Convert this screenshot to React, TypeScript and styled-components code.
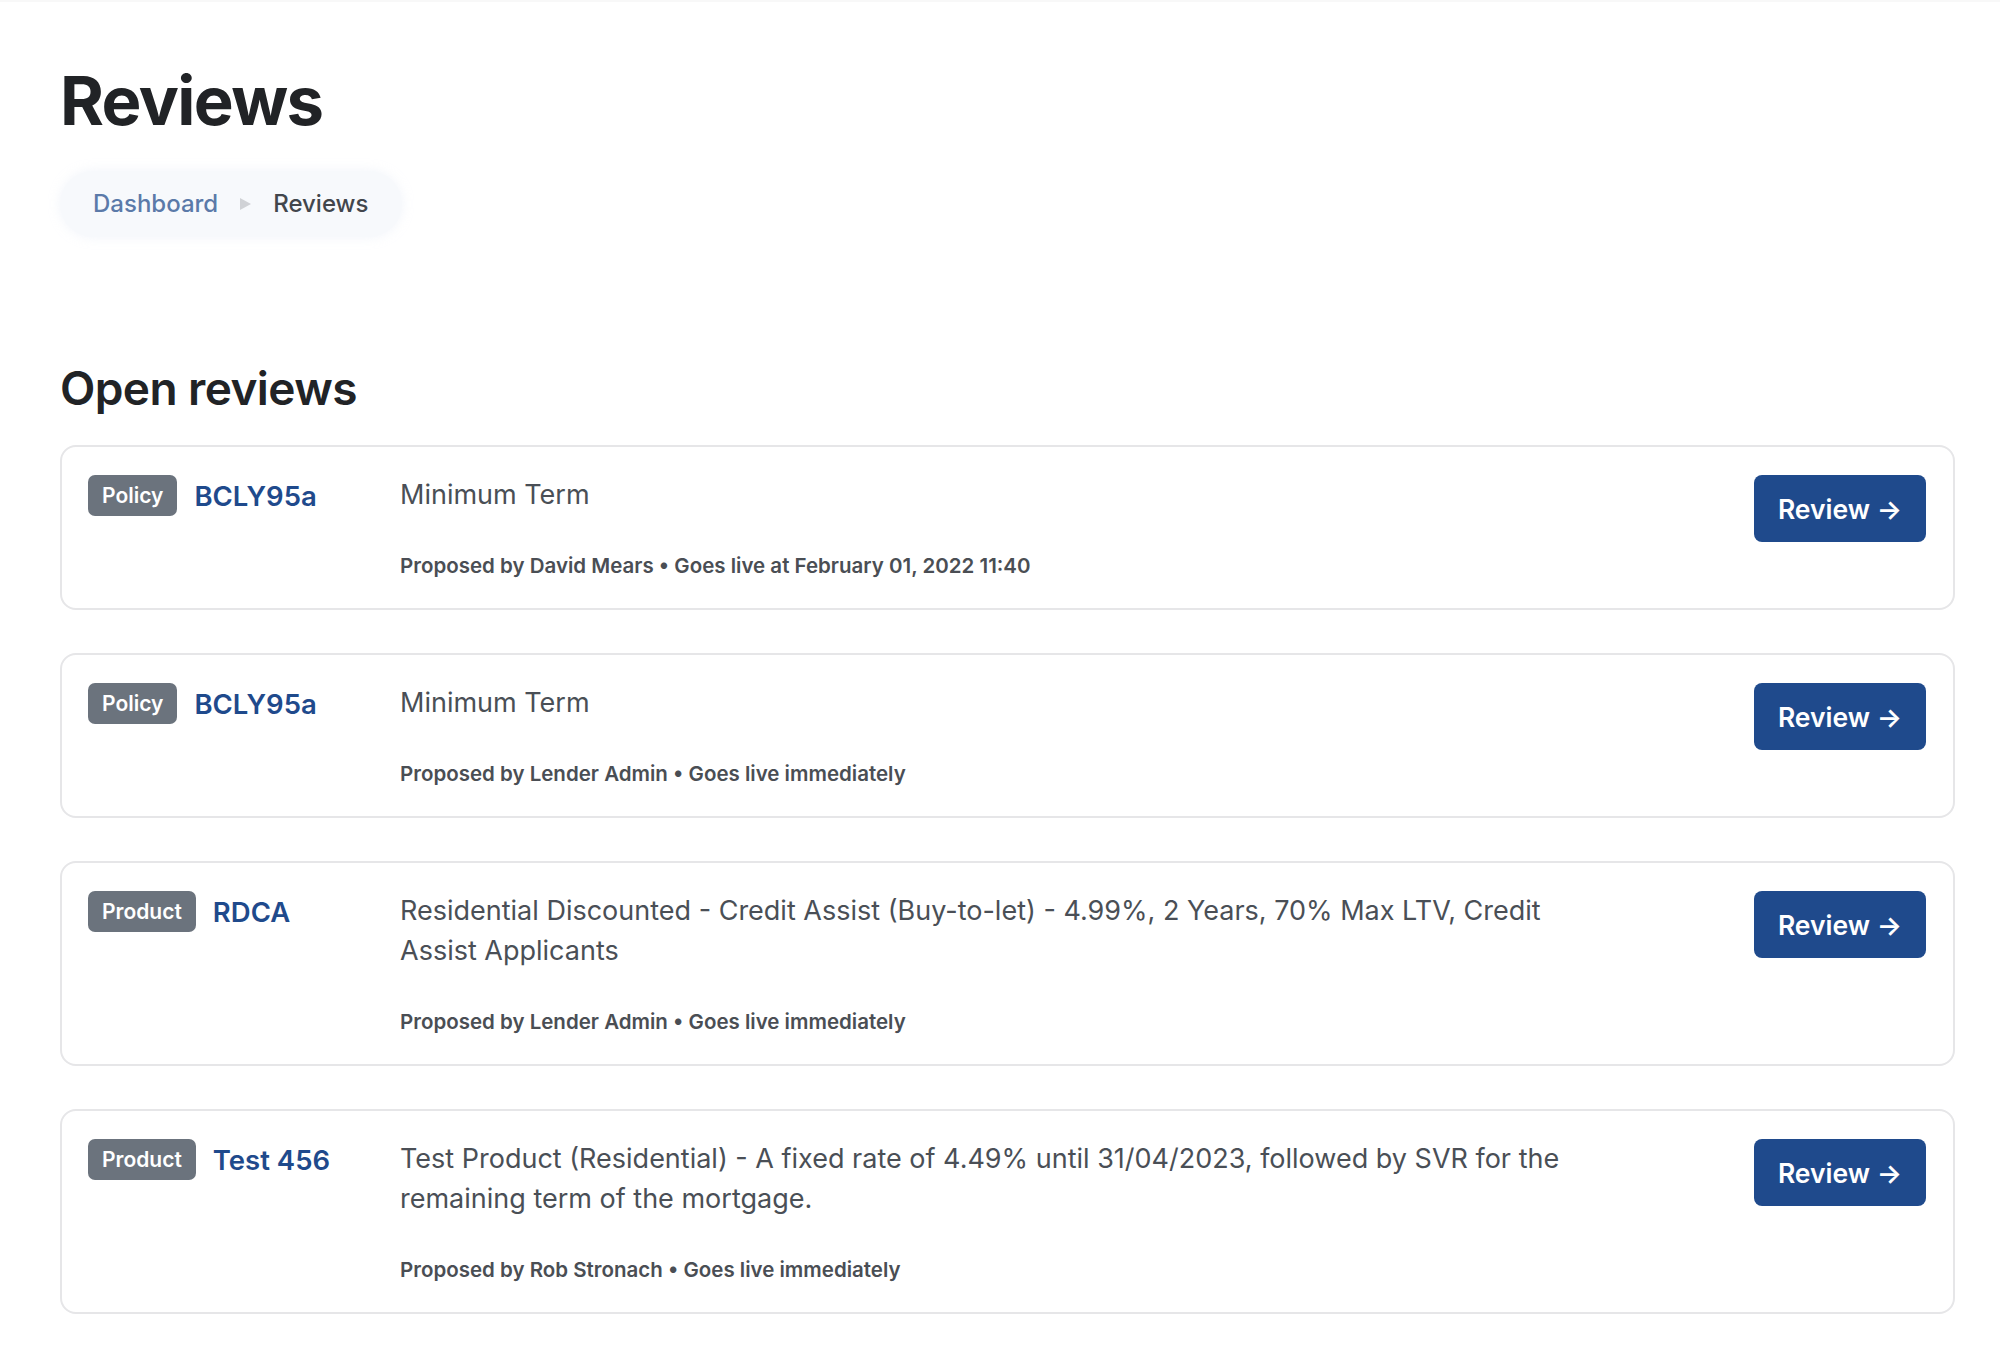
import React from 'react';
import styled, { createGlobalStyle } from 'styled-components';

interface Review {
  id: number;
  kind: 'Policy' | 'Product';
  code: string;
  title: string;
  proposedBy: string;
  goesLive: string;
}

const reviews: Review[] = [
  {
    id: 1,
    kind: 'Policy',
    code: 'BCLY95a',
    title: 'Minimum Term',
    proposedBy: 'David Mears',
    goesLive: 'Goes live at February 01, 2022 11:40',
  },
  {
    id: 2,
    kind: 'Policy',
    code: 'BCLY95a',
    title: 'Minimum Term',
    proposedBy: 'Lender Admin',
    goesLive: 'Goes live immediately',
  },
  {
    id: 3,
    kind: 'Product',
    code: 'RDCA',
    title:
      'Residential Discounted - Credit Assist (Buy-to-let) - 4.99%, 2 Years, 70% Max LTV, Credit Assist Applicants',
    proposedBy: 'Lender Admin',
    goesLive: 'Goes live immediately',
  },
  {
    id: 4,
    kind: 'Product',
    code: 'Test 456',
    title:
      'Test Product (Residential) - A fixed rate of 4.49% until 31/04/2023, followed by SVR for the remaining term of the mortgage.',
    proposedBy: 'Rob Stronach',
    goesLive: 'Goes live immediately',
  },
];

const GlobalStyle = createGlobalStyle`
  html, body {
    margin: 0;
    padding: 0;
    background: #ffffff;
  }
  body {
    font-family: 'Inter', 'Liberation Sans', sans-serif;
    color: #212326;
    -webkit-font-smoothing: antialiased;
  }
  * { box-sizing: border-box; }
`;

const TopRule = styled.div`
  height: 2px;
  background: #ececec;
  border-bottom: 2px solid #f8f8f8;
`;

const Page = styled.main`
  padding: 57px 45px 40px 60px;
`;

const Title = styled.h1`
  margin: 0;
  font-size: 67px;
  line-height: 84px;
  font-weight: 700;
  letter-spacing: -1.6px;
  color: #212326;
`;

const Breadcrumbs = styled.nav`
  display: inline-flex;
  align-items: center;
  gap: 22px;
  margin-top: 28px;
  padding: 15px 34px 15px 33px;
  border-radius: 40px;
  background: #f7f9fc;
  box-shadow: 0 0 12px rgba(235, 240, 248, 0.7);
  font-size: 24px;
  line-height: 36px;
  font-weight: 500;
`;

const Crumb = styled.span<{ $current?: boolean }>`
  color: ${(p) => (p.$current ? '#42464c' : '#5b7aa9')};
`;

const CrumbArrow = styled.span`
  width: 0;
  height: 0;
  border-top: 6.5px solid transparent;
  border-bottom: 6.5px solid transparent;
  border-left: 11px solid #d0d2d6;
`;

const SectionTitle = styled.h2`
  margin: 124px 0 29px;
  font-size: 46px;
  line-height: 55px;
  font-weight: 600;
  letter-spacing: -0.6px;
  color: #212326;
`;

const List = styled.div`
  display: flex;
  flex-direction: column;
  gap: 43px;
`;

const Card = styled.article`
  display: flex;
  align-items: flex-start;
  padding: 28px 27px 29px 26px;
  border: 2px solid #e6e6e8;
  border-radius: 16px;
  background: #ffffff;
`;

const Ident = styled.div`
  width: 312px;
  flex-shrink: 0;
  display: flex;
  align-items: center;
  gap: 17px;
`;

const Badge = styled.span`
  display: inline-block;
  height: 41px;
  padding: 0 14px;
  border-radius: 7px;
  background: #6b737d;
  color: #ffffff;
  font-size: 21px;
  line-height: 41px;
  font-weight: 600;
`;

const Code = styled.span`
  color: #1f4a8c;
  font-size: 27.5px;
  line-height: 40px;
  font-weight: 600;
`;

const Body = styled.div`
  flex: 1;
  max-width: 1200px;
`;

const ReviewTitle = styled.div`
  font-size: 27px;
  line-height: 40px;
  font-weight: 400;
  color: #4a4f56;
`;

const Meta = styled.div`
  margin-top: 37px;
  font-size: 20.5px;
  line-height: 27px;
  font-weight: 600;
  color: #4a4e54;
`;

const ReviewButton = styled.button`
  margin-left: auto;
  flex-shrink: 0;
  height: 67px;
  padding: 0 24px;
  border: none;
  border-radius: 8px;
  background: #1f4a8c;
  color: #ffffff;
  font-family: inherit;
  font-size: 26.5px;
  font-weight: 600;
  cursor: pointer;
`;

function ReviewCard({ review }: { review: Review }) {
  return (
    <Card>
      <Ident>
        <Badge>{review.kind}</Badge>
        <Code>{review.code}</Code>
      </Ident>
      <Body>
        <ReviewTitle>{review.title}</ReviewTitle>
        <Meta>
          Proposed by {review.proposedBy} • {review.goesLive}
        </Meta>
      </Body>
      <ReviewButton>Review →</ReviewButton>
    </Card>
  );
}

export default function App() {
  return (
    <>
      <GlobalStyle />
      <TopRule />
      <Page>
        <Title>Reviews</Title>
        <Breadcrumbs>
          <Crumb>Dashboard</Crumb>
          <CrumbArrow />
          <Crumb $current>Reviews</Crumb>
        </Breadcrumbs>
        <SectionTitle>Open reviews</SectionTitle>
        <List>
          {reviews.map((r) => (
            <ReviewCard key={r.id} review={r} />
          ))}
        </List>
      </Page>
    </>
  );
}
